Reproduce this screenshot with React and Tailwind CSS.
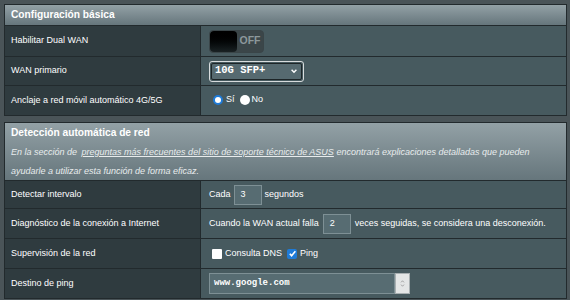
import React from "react";

const Row = ({ label, h, children, last }) => (
  <div className={`flex ${h} ${last ? "" : "border-b border-[#222a2d]"}`}>
    <div className="w-[196px] shrink-0 bg-[#2f3b3f] flex items-center pl-[6px] text-[9px] text-white border-r border-[#222a2d]">
      {label}
    </div>
    <div className="flex-1 bg-[#475a5f] flex items-center pl-[8px] text-[9px] text-white">
      {children}
    </div>
  </div>
);

const Radio = ({ checked }) =>
  checked ? (
    <span className="w-[10px] h-[10px] rounded-full bg-white border-[2.5px] border-[#1e7bd8] inline-block" />
  ) : (
    <span className="w-[10px] h-[10px] rounded-full bg-white inline-block" />
  );

const Check = ({ checked }) =>
  checked ? (
    <span className="w-[10px] h-[10px] rounded-[2px] bg-[#1e7bd8] inline-flex items-center justify-center">
      <svg viewBox="0 0 10 10" className="w-[9px] h-[9px]">
        <path d="M2 5.2l2 2.2L8.2 2.5" fill="none" stroke="white" strokeWidth="1.8" />
      </svg>
    </span>
  ) : (
    <span className="w-[10px] h-[10px] rounded-[1px] bg-white inline-block" />
  );

const NumInput = ({ value }) => (
  <span className="w-[28px] h-[20px] bg-[#576c72] border border-[#7e9095] flex items-center pl-[6px] text-[9px] text-white">
    {value}
  </span>
);

const Header = ({ children, className }) => (
  <div
    className={`bg-gradient-to-b from-[#93a1a6] to-[#66767c] border-b border-[#222a2d] pl-[6px] ${className}`}
  >
    {children}
  </div>
);

export default function App() {
  return (
    <div className="w-[570px] h-[300px] bg-[#4a5458] pt-[4px] pl-[4px] pr-[3px] font-['Liberation_Sans',Arial,sans-serif] overflow-hidden">
      <div className="border border-[#222a2d]">
        <Header className="h-[21px] flex items-center">
          <span className="text-[10.2px] font-bold text-white">Configuración básica</span>
        </Header>
        <Row label="Habilitar Dual WAN" h="h-[31px]">
          <div className="flex h-[23px] w-[55px] rounded-[4px] border border-[#3a4548] bg-[#3b4649] overflow-hidden">
            <div className="w-[27px] h-full rounded-[4px] bg-gradient-to-b from-[#000] to-[#1a2224]" />
            <div className="flex-1 flex items-center justify-center text-[10.5px] font-bold text-[#8c989b]">OFF</div>
          </div>
        </Row>
        <Row label="WAN primario" h="h-[29px]">
          <div className="w-[95px] h-[21px] rounded-[3px] border border-[#d8dcdd] p-px">
            <div className="w-full h-full rounded-[2px] border border-[#1d2527] bg-[#566a70] flex items-center justify-between pl-[3px] pr-[3px]">
              <span className="font-['Liberation_Mono',monospace] font-bold text-[10.5px] text-white">10G SFP+</span>
              <svg viewBox="0 0 10 10" className="w-[8px] h-[8px]">
                <path d="M2 3.5l3 3 3-3" fill="none" stroke="white" strokeWidth="1.8" />
              </svg>
            </div>
          </div>
        </Row>
        <Row label="Anclaje a red móvil automático 4G/5G" h="h-[29px]" last>
          <div className="flex items-center pl-[4px] -mt-[2px]">
            <Radio checked />
            <span className="ml-[3px] mr-[5px]">Sí</span>
            <Radio />
            <span className="ml-[2px]">No</span>
          </div>
        </Row>
      </div>

      <div className="border border-[#222a2d] mt-[6px]">
        <Header className="h-[58px] pt-[3px]">
          <div className="text-[10.2px] font-bold text-white leading-[14px]">Detección automática de red</div>
          <div className="text-[9px] italic text-[#e8eced] leading-[19px] mt-[3px]">
            En la sección de{" "}
            <span className="underline ml-[2px]">
              preguntas más frecuentes del sitio de soporte técnico de ASUS
            </span>{" "}
            encontrará explicaciones detalladas que pueden
            <br />
            ayudarle a utilizar esta función de forma eficaz.
          </div>
        </Header>
        <Row label="Detectar intervalo" h="h-[28px]">
          <span>Cada</span>
          <span className="ml-[3px] mr-[3px]">
            <NumInput value="3" />
          </span>
          <span>segundos</span>
        </Row>
        <Row label="Diagnóstico de la conexión a Internet" h="h-[30px]">
          <span>Cuando la WAN actual falla</span>
          <span className="ml-[4px] mr-[4px]">
            <NumInput value="2" />
          </span>
          <span>veces seguidas, se considera una desconexión.</span>
        </Row>
        <Row label="Supervisión de la red" h="h-[30px]">
          <div className="flex items-center pl-[3px]">
            <Check />
            <span className="ml-[3px] mr-[5px]">Consulta DNS</span>
            <Check checked />
            <span className="ml-[3px]">Ping</span>
          </div>
        </Row>
        <Row label="Destino de ping" h="h-[29px]" last>
          <div className="flex h-[21px]">
            <div className="w-[186px] h-full bg-[#576c72] border border-[#7e9095] flex items-center pl-[4px] font-['Liberation_Mono',monospace] text-[9px] font-bold text-white">
              www.google.com
            </div>
            <div className="w-[15px] h-full bg-[#e4e6e6] border border-[#a9b0b2] flex flex-col items-center justify-center gap-[1px]">
              <svg viewBox="0 0 6 4" className="w-[5px] h-[3px]">
                <path d="M1 3.2L3 1l2 2.2" fill="none" stroke="#888" strokeWidth="0.9" />
              </svg>
              <svg viewBox="0 0 6 4" className="w-[5px] h-[3px]">
                <path d="M1 0.8L3 3l2-2.2" fill="none" stroke="#888" strokeWidth="0.9" />
              </svg>
            </div>
          </div>
        </Row>
      </div>
    </div>
  );
}
